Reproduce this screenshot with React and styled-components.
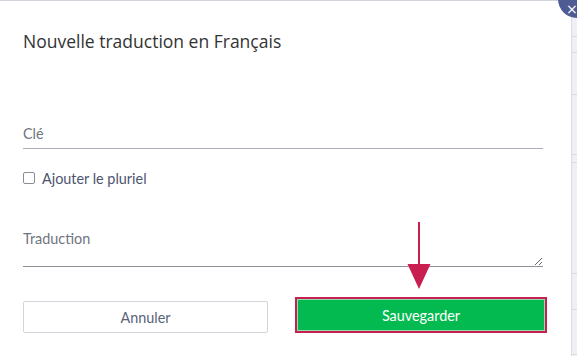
import React from 'react';
import styled, { createGlobalStyle } from 'styled-components';

const GlobalStyle = createGlobalStyle`
  html, body {
    margin: 0;
    padding: 0;
    background: #eef0f4;
  }
  * {
    box-sizing: border-box;
  }
`;

const rowLines = [37, 16, 42, 60, 8, 111, 36, 45];

const App = () => {
  return (
    <>
      <GlobalStyle />
      <Page>
        <Modal>
          <Title>Nouvelle traduction en Français</Title>
          <Form>
            <KeyInput placeholder="Clé" />
            <CheckRow>
              <Checkbox type="checkbox" />
              <span>Ajouter le pluriel</span>
            </CheckRow>
            <TranslationInput placeholder="Traduction" />
            <Actions>
              <CancelButton type="button">Annuler</CancelButton>
              <SaveButton type="button">Sauvegarder</SaveButton>
            </Actions>
          </Form>
          <Arrow viewBox="0 0 24 68" aria-hidden="true">
            <rect x="11" y="0" width="2" height="46" fill="#c91f50" />
            <polygon points="0.5,42 23.5,42 12,67" fill="#c91f50" />
          </Arrow>
        </Modal>
        <Backdrop>
          {rowLines.map((h, i) => (
            <BackdropRow key={i} style={{ height: h }} />
          ))}
        </Backdrop>
        <CloseButton aria-label="Fermer">×</CloseButton>
      </Page>
    </>
  );
};

const Page = styled.div`
  position: relative;
  display: flex;
  width: 577px;
  height: 356px;
  overflow: hidden;
`;

const Modal = styled.div`
  position: relative;
  width: 572px;
  height: 356px;
  flex-shrink: 0;
  background: #fff;
  border-top: 1px solid #d2d3da;
  border-right: 1px solid #dcdee3;
  padding: 28px 28px 0 23px;
`;

const Title = styled.h2`
  margin: 0;
  font-family: 'Open Sans', sans-serif;
  font-weight: 400;
  font-size: 17.5px;
  line-height: 24px;
  color: #333;
`;

const Form = styled.div`
  display: flex;
  flex-direction: column;
  margin-top: 65px;
  font-family: Lato, 'Open Sans', sans-serif;
  font-size: 14.4px;
`;

const KeyInput = styled.input`
  width: 520px;
  height: 31px;
  padding: 0;
  border: none;
  border-bottom: 1px solid #a9adb5;
  background: transparent;
  font: inherit;
  color: #333;
  outline: none;

  &::placeholder {
    color: #6f7480;
  }
`;

const CheckRow = styled.label`
  display: flex;
  align-items: center;
  gap: 7px;
  height: 18px;
  margin-top: 20px;
  color: #4d5572;
`;

const Checkbox = styled.input`
  appearance: none;
  width: 12px;
  height: 12px;
  margin: 0;
  border: 1px solid #8a8d96;
  border-radius: 2px;
  background: #fff;
`;

const TranslationInput = styled.textarea`
  width: 520px;
  height: 45px;
  margin-top: 35px;
  padding: 8px 0 0;
  border: none;
  border-bottom: 1px solid #8e929b;
  background: transparent;
  font: inherit;
  line-height: 18px;
  color: #333;
  outline: none;
  resize: vertical;

  &::placeholder {
    color: #6f7480;
  }
`;

const Actions = styled.div`
  display: grid;
  grid-template-columns: 245px 248px;
  column-gap: 29px;
  margin-top: 34px;
`;

const BaseButton = styled.button`
  height: 32px;
  border-radius: 2px;
  font-family: Lato, 'Open Sans', sans-serif;
  font-size: 14.4px;
  cursor: pointer;
`;

const CancelButton = styled(BaseButton)`
  border: 1px solid #d3d5dc;
  background: #fff;
  color: #5a6379;
`;

const SaveButton = styled(BaseButton)`
  margin-top: -2px;
  border: 1px solid #8fdcae;
  border-radius: 0;
  background: #02ba4f;
  color: #fff;
  outline: 2px solid #c91f50;
  outline-offset: 0;
  box-shadow: 0 0 0 1px #c91f50;
`;

const Arrow = styled.svg`
  position: absolute;
  left: 407px;
  top: 221px;
  width: 24px;
  height: 68px;
`;

const Backdrop = styled.div`
  flex: 1;
  background: #eef0f4;
`;

const BackdropRow = styled.div`
  border-bottom: 1px solid #d9dce2;
`;

const CloseButton = styled.button`
  position: absolute;
  top: -20px;
  left: 558px;
  width: 38px;
  height: 38px;
  padding: 0;
  border: none;
  border-radius: 50%;
  background: #4f5b92;
  color: #fff;
  font-family: 'DejaVu Sans', sans-serif;
  font-size: 14px;
  line-height: 58px;
  text-align: left;
  text-indent: 8px;
`;

export default App;
